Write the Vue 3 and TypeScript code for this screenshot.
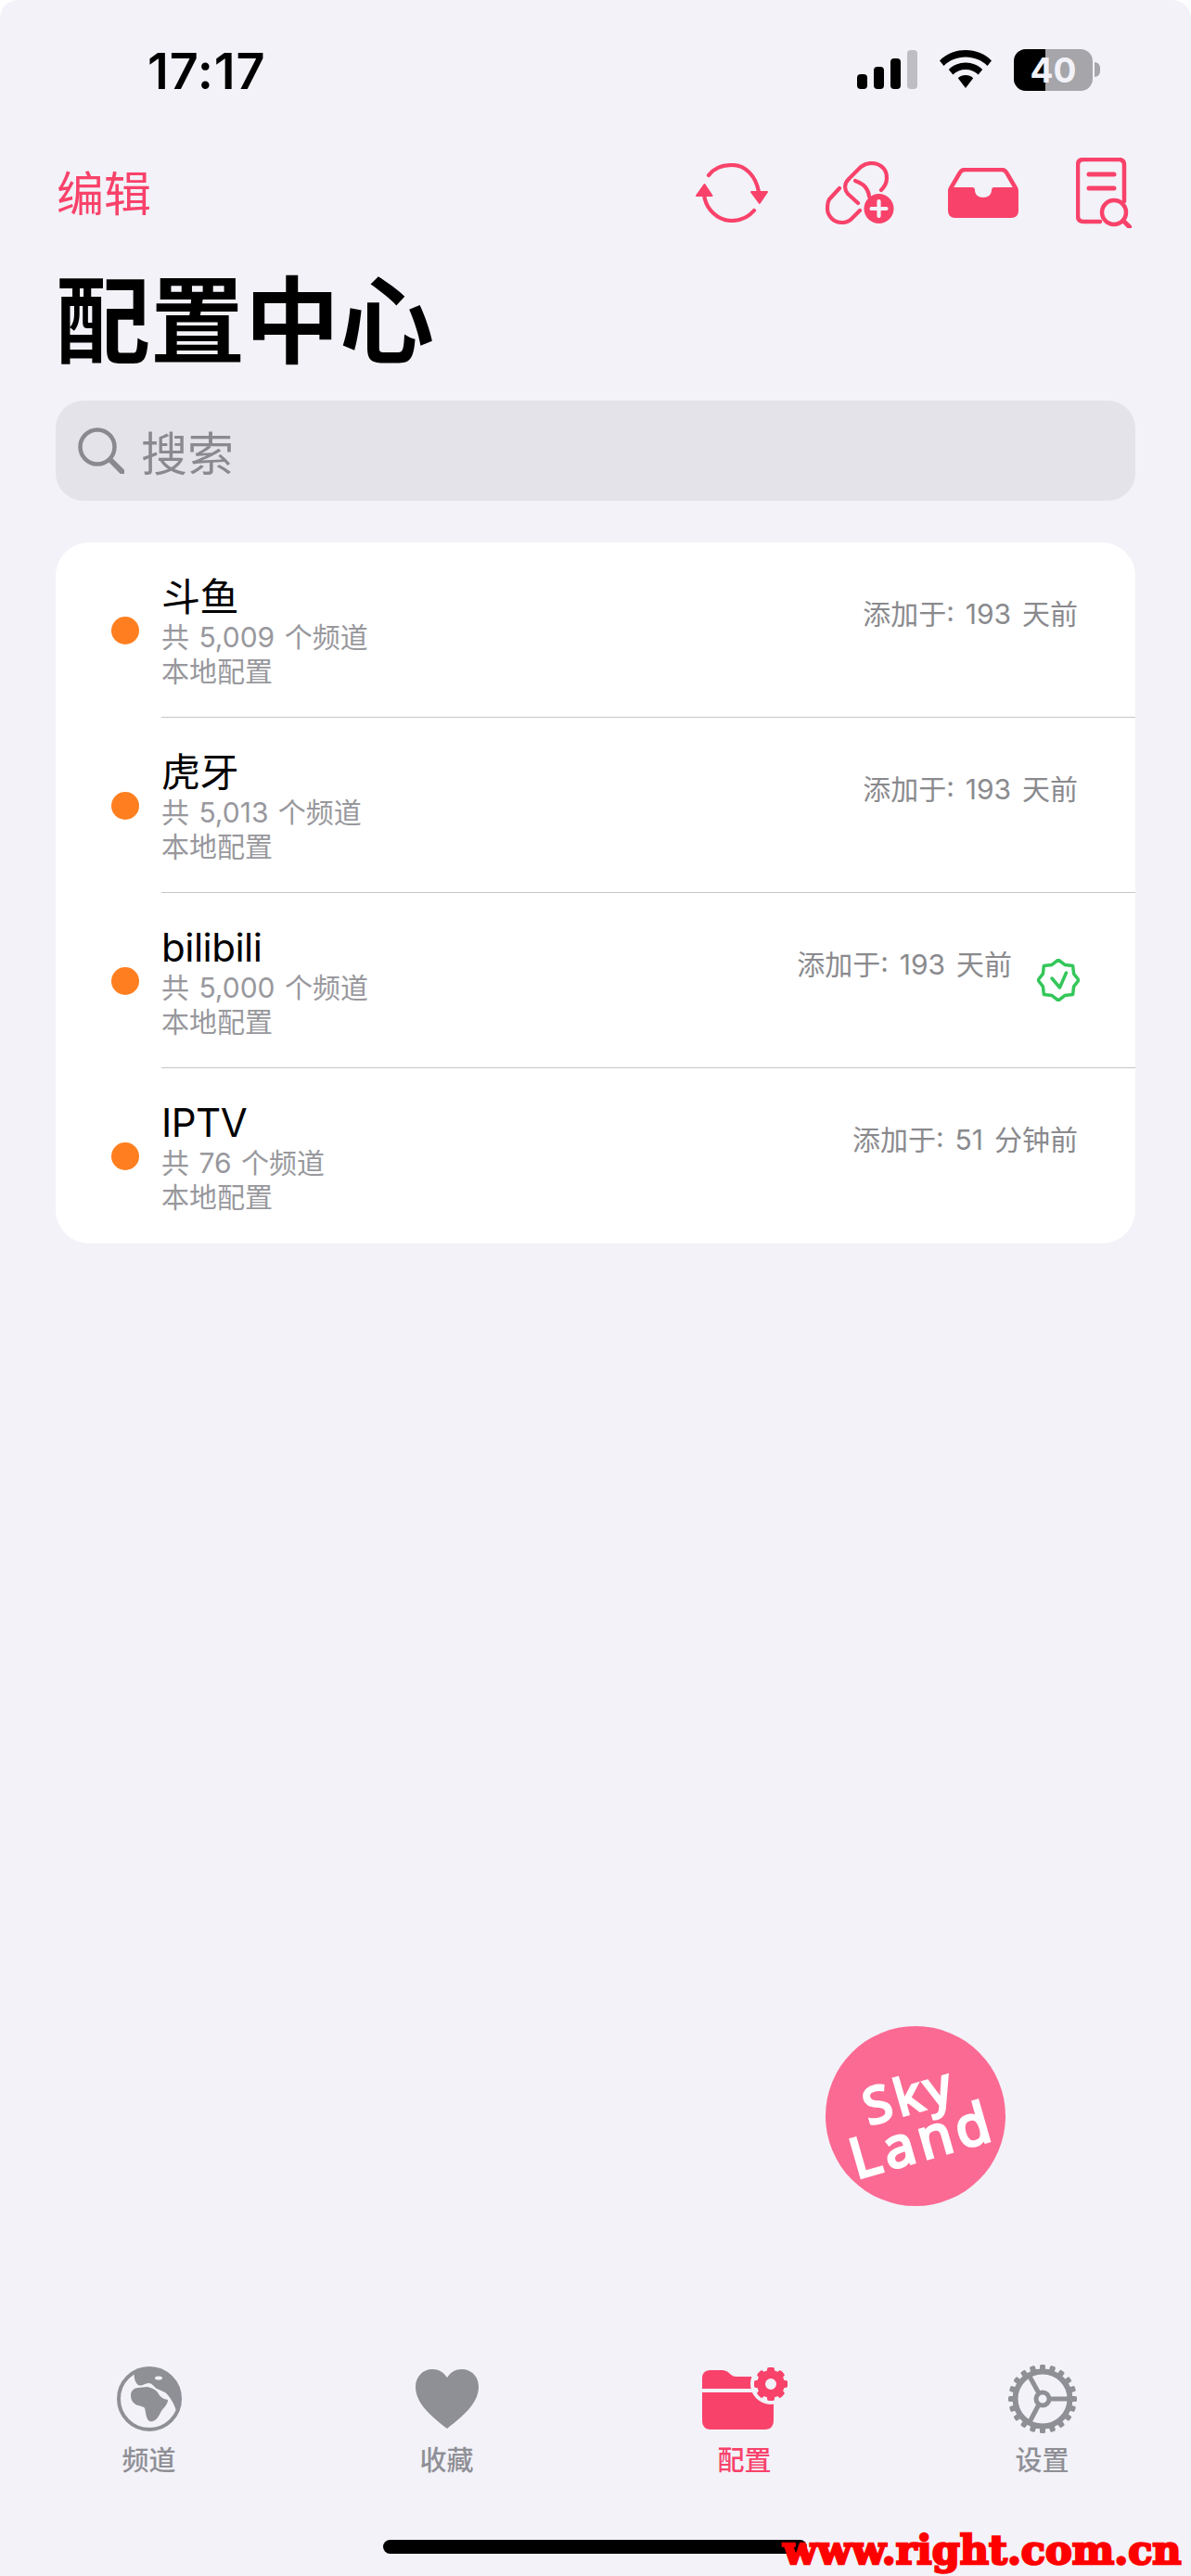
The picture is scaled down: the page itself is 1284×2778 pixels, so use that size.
<template>
  <div class="screen">
    <div class="status">
      <span class="time">17:17</span>
      <div class="status-icons">
        <svg class="signal" width="65" height="42" viewBox="0 0 65 42">
          <rect x="0" y="26" width="11" height="16" rx="4" fill="#000" />
          <rect x="18" y="18" width="11" height="24" rx="4" fill="#000" />
          <rect x="36" y="9" width="11" height="33" rx="4" fill="#000" />
          <rect x="54" y="0" width="11" height="42" rx="4" fill="#bdbdc3" />
        </svg>
        <svg class="wifi" width="58" height="42" viewBox="0 0 58 42">
          <path d="M29 0C18 0 8 4 1 11.500L5.500 17C11.500 11 20 7.500 29 7.500S46.500 11 52.500 17L57 11.500C50 4 40 0 29 0Z" fill="#000" />
          <path d="M29 13.500C22 13.500 15.500 16.300 10.800 21L15.300 26.500C18.800 23 23.700 21 29 21S39.200 23 42.700 26.500L47.200 21C42.500 16.300 36 13.500 29 13.500Z" fill="#000" />
          <path d="M29 27C25.800 27 23 28.200 20.800 30.200L29 41L37.200 30.200C35 28.200 32.200 27 29 27Z" fill="#000" />
        </svg>
        <div class="battery">
          <div class="battery-body">
            <div class="battery-fill"></div>
            <span class="battery-text">40</span>
          </div>
          <div class="battery-nub"></div>
        </div>
      </div>
    </div>

    <div class="nav">
      <span class="edit">编辑</span>
      <div class="nav-icons">
        <svg width="78" height="64" viewBox="0 0 78 64" fill="none" stroke="#f9426a" stroke-width="4.200" stroke-linecap="round">
          <path d="M14 13C20 5 29 2 39 2C54 2 65 14 68 31" />
          <path d="M9 34C11 50 24 62 39 62C49 62 57 58 63 51" />
          <path d="M1 35L9.500 23L17.500 35Z" fill="#f9426a" stroke-width="2" stroke-linejoin="round" />
          <path d="M60 31H77L68.800 43Z" fill="#f9426a" stroke-width="2" stroke-linejoin="round" />
        </svg>
        <svg width="74" height="68" viewBox="0 0 74 68" fill="none" stroke="#f9426a" stroke-width="4.200" stroke-linecap="round" stroke-linejoin="round">
          <path d="M35 45L24 35C20 30 20 24 25 19L38 6C42 3 45 2 49 2C53 2 58 3 62 7C65 10 66 14 66 18C66 23 64 27 60 31" />
          <path d="M15 29L4 41C2 44 2 47 2 51C2 55 4 59 7 62C10 65 14 66 18 66C22 66 25 65 28 62L37 53" />
          <path d="M32 21C38 23 43 27 45 31C46 33 47 35 47 38" />
          <circle cx="57.500" cy="51" r="16" fill="#f9426a" stroke="none" />
          <path d="M57.500 43V59M49.500 51H65.500" stroke="#f2f2f8" />
        </svg>
        <svg class="inbox" width="76" height="54" viewBox="0 0 76 54">
          <path d="M18 2H58C60 2 62 3 63 5L73 22" fill="none" stroke="#f9426a" stroke-width="4.500" stroke-linecap="round" />
          <path d="M18 2C16 2 14 3 13 5L3 22" fill="none" stroke="#f9426a" stroke-width="4.500" stroke-linecap="round" />
          <path d="M0 25C0 22 1 21 4 21H26C28 21 29 22 29 24C29 29 33 32 38 32S47 29 47 24C47 22 48 21 50 21H72C75 21 76 22 76 25V46C76 51 73 54 68 54H8C3 54 0 51 0 46Z" fill="#f9426a" />
        </svg>
        <svg width="60" height="76" viewBox="0 0 60 76" fill="none" stroke="#f9426a" stroke-width="4.500" stroke-linecap="round">
          <path d="M26 69H8C4 69 2 67 2 63V8C2 4 4 2 8 2H46C50 2 52 4 52 8V47" />
          <path d="M14 18H41M14 33H41" stroke-width="5" />
          <circle cx="41" cy="59" r="13" />
          <path d="M51 68L58 75" stroke-width="5" />
        </svg>
      </div>
    </div>

    <h1 class="title">配置中心</h1>

    <div class="search">
      <svg width="50" height="50" viewBox="0 0 50 50" fill="none" stroke="#8a8a8e" stroke-width="4.500">
        <circle cx="21" cy="21" r="18.500" />
        <path d="M35 35L48 48" stroke-width="6" stroke-linecap="round" />
      </svg>
      <span class="search-text">搜索</span>
    </div>

    <div class="card">
      <div v-for="item in items" :key="item.name" class="row">
        <div class="dot"></div>
        <div class="row-main">
          <div class="row-text">
            <div class="name">{{ item.name }}</div>
            <div class="sub">共 {{ item.count }} 个频道</div>
            <div class="sub">本地配置</div>
          </div>
          <div class="added">添加于: {{ item.added }}</div>
          <svg v-if="item.active" class="badge" width="46" height="46" viewBox="0 0 46 46" fill="none" stroke="#34c759" stroke-width="3.500" stroke-linejoin="round" stroke-linecap="round">
            <path d="M23 1L29.900 6.400L38.600 7.400L39.600 16.100L45 23L39.600 29.900L38.600 38.600L29.900 39.600L23 45L16.100 39.600L7.400 38.600L6.400 29.900L1 23L6.400 16.100L7.400 7.400L16.100 6.400Z" />
            <path d="M16 21L24.500 31L31.500 15" />
          </svg>
        </div>
      </div>
    </div>

    <div class="spacer"></div>

    <div class="tabs">
      <div v-for="tab in tabs" :key="tab.label" class="tab" :class="{ on: tab.on }">
        <div class="tab-icon">
          <svg v-if="tab.label === '频道'" width="70" height="70" viewBox="0 0 70 70">
            <circle cx="35" cy="35" r="33" fill="none" stroke="#8f8f96" stroke-width="4" />
            <path d="M19 6C18 10 19 17 23 20C27 22 30 18 34 18C38 18 39 21 43 24L52 28C58 33 63 42 65 52A34 34 0 0 0 19 6Z" fill="#8f8f96" />
            <path d="M15 31C15 26 19 23 23 23L33 22C37 23 42 25 44 28C46 32 49 35 55 36C55 41 50 45 48 48C46 52 44 56 41 58C38 60 35 60 33 57C31 53 31 48 30 45C28 42 22 43 19 40C16 38 15 34 15 31Z" fill="#8f8f96" />
            <ellipse cx="45" cy="12.500" rx="4" ry="2" fill="#f2f2f8" />
          </svg>
          <svg v-else-if="tab.label === '收藏'" width="68" height="64" viewBox="0 0 68 64">
            <path d="M34 64C20 53 0 38 0 19C0 8 8 0 18 0C25 0 30 3 34 9C38 3 43 0 50 0C60 0 68 8 68 19C68 38 48 53 34 64Z" fill="#8f8f96" />
          </svg>
          <svg v-else-if="tab.label === '配置'" class="folder" width="92" height="66" viewBox="0 0 92 66">
            <path d="M0 11C0 5 3 2 9 2H20C25 2 27 3 30 6C32 8 34 9 37 9H77V56C77 62 74 66 68 66H9C3 66 0 62 0 56Z" fill="#f9426a" />
            <rect x="0" y="22" width="60" height="4" fill="#f2f2f8" />
            <circle cx="74" cy="17" r="22" fill="#f2f2f8" />
            <circle cx="74" cy="17" r="10.500" fill="none" stroke="#f9426a" stroke-width="9" />
            <g fill="#f9426a">
              <rect v-for="a in [0, 45, 90, 135, 180, 225, 270, 315]" :key="a" x="70" y="-1" width="8" height="8" rx="2" :transform="`rotate(${a} 74 17)`" />
            </g>
          </svg>
          <svg v-else width="76" height="76" viewBox="0 0 76 76">
            <circle cx="38" cy="38" r="29.500" fill="none" stroke="#8f8f96" stroke-width="6" />
            <g fill="#8f8f96">
              <rect v-for="a in teeth" :key="a" x="35" y="1" width="6" height="9" rx="1.500" :transform="`rotate(${a} 38 38)`" />
            </g>
            <circle cx="38" cy="38" r="7" fill="none" stroke="#8f8f96" stroke-width="5" />
            <path d="M45 38H66M34 32L23 12M34 44L24 63" stroke="#8f8f96" stroke-width="5" fill="none" />
          </svg>
        </div>
        <span class="tab-label">{{ tab.label }}</span>
      </div>
    </div>

    <div class="fab">
      <div class="fab-text">
        <span class="fab-sky">Sky</span>
        <span class="fab-land">Land</span>
      </div>
    </div>

    <div class="home-bar"></div>
    <div class="watermark">www.right.com.cn</div>
  </div>
</template>

<script setup lang="ts">
interface ConfigItem {
  name: string
  count: string
  added: string
  active?: boolean
}

const items: ConfigItem[] = [
  { name: '斗鱼', count: '5,009', added: '193 天前' },
  { name: '虎牙', count: '5,013', added: '193 天前' },
  { name: 'bilibili', count: '5,000', added: '193 天前', active: true },
  { name: 'IPTV', count: '76', added: '51 分钟前' },
]

const tabs = [
  { label: '频道', on: false },
  { label: '收藏', on: false },
  { label: '配置', on: true },
  { label: '设置', on: false },
]

// 设置图标的齿
const teeth = Array.from({ length: 20 }, (_, i) => i * 18)
</script>

<style>
html,
body {
  margin: 0;
  background: #fff;
}
</style>

<style scoped>
.screen {
  position: relative;
  width: 1284px;
  height: 2778px;
  display: flex;
  flex-direction: column;
  overflow: hidden;
  background: #f2f2f8;
  border-radius: 20px 20px 0 0;
  font-family: Inter, "Noto Sans CJK SC", sans-serif;
  color: #000;
}
.status {
  display: flex;
  align-items: center;
  justify-content: space-between;
  height: 42px;
  padding: 54px 98px 0 159px;
}
.time {
  margin-top: 4px;
  font-size: 54px;
  font-weight: 600;
  line-height: 42px;
  letter-spacing: 0.8px;
}
.status-icons {
  display: flex;
  align-items: center;
  gap: 23px;
}
.battery {
  display: flex;
  align-items: center;
  gap: 2px;
}
.battery-body {
  position: relative;
  width: 85px;
  height: 45px;
  border-radius: 13px;
  background: #a5a5aa;
  overflow: hidden;
  display: flex;
  align-items: center;
  justify-content: center;
}
.battery-fill {
  position: absolute;
  left: 0;
  top: 0;
  bottom: 0;
  width: 34px;
  background: #000;
}
.battery-text {
  position: relative;
  font-size: 37px;
  font-weight: 700;
  color: #f2f2f8;
}
.battery-nub {
  width: 6px;
  height: 16px;
  border-radius: 0 8px 8px 0;
  background: #a5a5aa;
}
.nav {
  display: flex;
  align-items: center;
  justify-content: space-between;
  margin-top: 74px;
  height: 76px;
  padding: 0 64px 0 61px;
}
.edit {
  margin-top: -4px;
  font-size: 51px;
  color: #f9426a;
}
.nav-icons {
  display: flex;
  align-items: center;
  gap: 62px;
}
.inbox {
  margin-left: -4px;
}
.title {
  margin: 44px 0 0 60px;
  font-size: 102px;
  line-height: 114px;
  font-weight: 700;
}
.search {
  display: flex;
  align-items: center;
  gap: 18px;
  height: 108px;
  margin: 28px 60px 0;
  padding: 0 24px;
  border-radius: 30px;
  background: #e3e3e9;
}
.search-text {
  font-size: 50px;
  color: #8a8a8e;
}
.card {
  margin: 45px 60px 0;
  border-radius: 36px;
  background: #fff;
}
.row {
  display: flex;
  align-items: center;
  height: 189px;
  padding-left: 60px;
}
.dot {
  flex: none;
  width: 30px;
  height: 30px;
  border-radius: 50%;
  background: #ff7f20;
}
.row-main {
  flex: 1;
  display: flex;
  align-items: center;
  box-sizing: border-box;
  height: 100%;
  margin-left: 24px;
  padding-right: 62px;
  border-bottom: 1px solid #c6c6c8;
}
.row:last-child .row-main {
  border-bottom: none;
}
.row-text {
  flex: 1;
  padding-top: 3px;
}
.name {
  font-size: 42px;
  line-height: 50px;
  letter-spacing: -0.5px;
}
.sub {
  font-size: 30px;
  line-height: 37px;
  word-spacing: 2px;
  color: #98989d;
}
.added {
  align-self: flex-start;
  margin-top: 58px;
  font-size: 30px;
  line-height: 38px;
  word-spacing: 3.5px;
  color: #8a8a8e;
}
.badge {
  flex: none;
  margin: 0 -2px 0 27px;
}
.spacer {
  flex: 1;
}
.tabs {
  display: grid;
  grid-template-columns: repeat(4, 1fr);
  padding-bottom: 106px;
}
.tab {
  display: flex;
  flex-direction: column;
  align-items: center;
  color: #8f8f96;
}
.tab.on {
  color: #f9426a;
}
.tab-icon {
  height: 80px;
  display: flex;
  align-items: center;
  justify-content: center;
}
.folder {
  overflow: visible;
}
.tab-label {
  margin-top: 9px;
  font-size: 29px;
  font-weight: 500;
  line-height: 36px;
}
.fab {
  position: absolute;
  left: 890px;
  top: 2185px;
  width: 194px;
  height: 194px;
  border-radius: 50%;
  background: #fb6a93;
  display: flex;
  align-items: center;
  justify-content: center;
}
.fab-text {
  display: flex;
  flex-direction: column;
  align-items: center;
  transform: rotate(-16deg);
  font-family: "Noto Sans", sans-serif;
  font-weight: 400;
  color: #fff;
  -webkit-text-stroke: 3px #fff;
  line-height: 50px;
  font-size: 60px;
  letter-spacing: 5px;
}
.fab-sky {
  font-size: 54px;
}
.home-bar {
  position: absolute;
  left: 413px;
  top: 2739px;
  width: 457px;
  height: 15px;
  border-radius: 8px;
  background: #000;
}
.watermark {
  position: absolute;
  left: 844px;
  top: 2726px;
  font-family: "DejaVu Serif", serif;
  font-size: 43px;
  font-weight: 700;
  line-height: 48px;
  color: #f00;
  -webkit-text-stroke: 2.5px #f00;
}
</style>
